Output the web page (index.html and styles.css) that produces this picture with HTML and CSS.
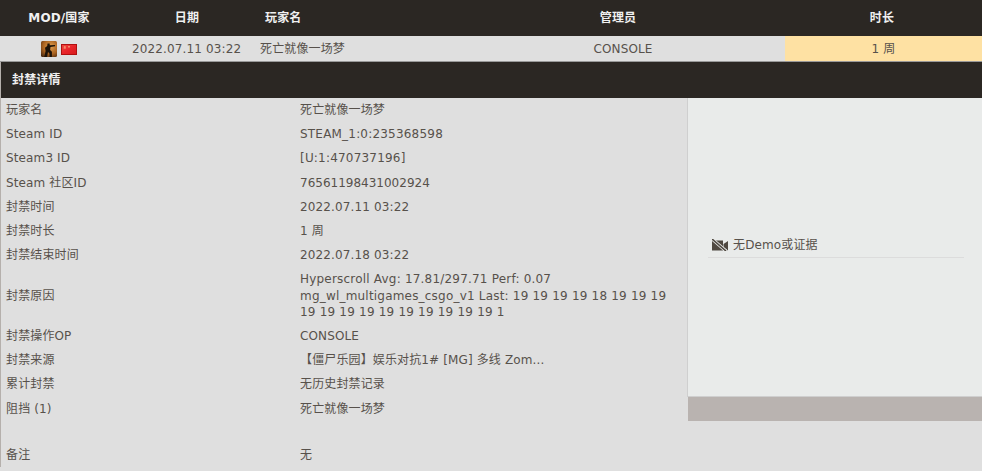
FILE: index.html
```html
<!DOCTYPE html>
<html lang="zh-CN">
<head>
<meta charset="utf-8">
<title>封禁详情</title>
<link rel="stylesheet" href="styles.css">
</head>
<body>
<div class="head">
  <div class="h-mod">MOD/国家</div>
  <div class="h-date">日期</div>
  <div class="h-name">玩家名</div>
  <div class="h-admin">管理员</div>
  <div class="h-len">时长</div>
</div>
<div class="ban">
  <div class="c-mod">
    <svg class="game" viewBox="0 0 16 16" width="16" height="16" aria-hidden="true">
      <defs><radialGradient id="gameBg" cx=".6" cy=".35" r=".8"><stop offset="0" stop-color="#e0a050"/><stop offset=".6" stop-color="#a8611f"/><stop offset="1" stop-color="#4a2a12"/></radialGradient></defs>
      <rect width="16" height="16" rx="1.500" fill="url(#gameBg)"/>
      <path d="M6.500 2.500h2.200v1.800l5.300-.4v1.300l-4.500.7-.4 3 1.800 1.800V16H8.500v-3.600L7 11l-1 5H3.200l1.400-6-.6-3.300 2.200-1.600z" fill="#1c1208"/>
    </svg>
    <svg class="flag" viewBox="0 0 16 11" width="16" height="11" aria-hidden="true">
      <defs><linearGradient id="flagBg" x1="0" y1="0" x2="1" y2="1"><stop offset="0" stop-color="#f04a3e"/><stop offset=".5" stop-color="#e8242a"/><stop offset="1" stop-color="#d41a1a"/></linearGradient></defs>
      <rect width="16" height="11" fill="url(#flagBg)"/>
      <rect x=".5" y=".5" width="15" height="10" fill="none" stroke="#b01010"/>
      <path d="M3 2l2 .6L4.500 5 2.600 4.500z M7 2h2v1.500H7z" fill="#f58a6a"/>
    </svg>
  </div>
  <div class="c-date">2022.07.11 03:22</div>
  <div class="c-name">死亡就像一场梦</div>
  <div class="c-admin">CONSOLE</div>
  <div class="c-len">1 周</div>
</div>
<div class="panel">
  <div class="title">封禁详情</div>
  <div class="detail">
    <div class="info">
      <div class="row"><div class="k">玩家名</div><div class="v">死亡就像一场梦</div></div>
      <div class="row"><div class="k">Steam ID</div><div class="v wide">STEAM_1:0:235368598</div></div>
      <div class="row"><div class="k">Steam3 ID</div><div class="v wide">[U:1:470737196]</div></div>
      <div class="row"><div class="k">Steam 社区ID</div><div class="v digits">76561198431002924</div></div>
      <div class="row"><div class="k">封禁时间</div><div class="v">2022.07.11 03:22</div></div>
      <div class="row"><div class="k">封禁时长</div><div class="v">1 周</div></div>
      <div class="row"><div class="k">封禁结束时间</div><div class="v">2022.07.18 03:22</div></div>
      <div class="row tall"><div class="k">封禁原因</div><div class="v reason">Hyperscroll Avg: 17.81/297.71 Perf: 0.07<br>mg_wl_multigames_csgo_v1 Last: 19 19 19 19 18 19 19 19<br>19 19 19 19 19 19 19 19 19 19 1</div></div>
      <div class="row"><div class="k">封禁操作OP</div><div class="v">CONSOLE</div></div>
      <div class="row"><div class="k">封禁来源</div><div class="v">【僵尸乐园】娱乐对抗1# [MG] 多线 Zom...</div></div>
      <div class="row"><div class="k">累计封禁</div><div class="v">无历史封禁记录</div></div>
      <div class="row"><div class="k">阻挡 (1)</div><div class="v">死亡就像一场梦</div></div>
    </div>
    <div class="side">
      <div class="demo-box">
        <div class="demo">
          <svg class="cam" viewBox="0 0 16 12" width="16" height="12" aria-hidden="true">
            <path d="M0 1.500h11v10H0z M11.500 5L16 2v9.500L11.500 8.500z" fill="#4f4840"/>
            <path d="M0 0l14 12" stroke="#e9ebea" stroke-width="3.200"/>
            <path d="M0 0l14 12" stroke="#4f4840" stroke-width="1.600"/>
          </svg>
          <span>无Demo或证据</span>
        </div>
      </div>
      <div class="actions"></div>
    </div>
  </div>
  <div class="row note"><div class="k">备注</div><div class="v">无</div></div>
</div>
</body>
</html>
```
FILE: styles.css
```css
* { box-sizing: border-box; }
html, body { margin: 0; padding: 0; }
body {
  width: 982px;
  height: 471px;
  overflow: hidden;
  background: #dfdfdf;
  color: #57514b;
  font: 12px/16.5px "DejaVu Sans", "Noto Sans CJK SC", sans-serif;
  letter-spacing: .13px;
}
.head {
  display: flex;
  align-items: center;
  height: 36px;
  background: #2b2723;
  color: #f0f0f0;
  font-weight: bold;
}
.h-mod { width: 118px; text-align: center; }
.h-date { width: 138px; text-align: center; }
.h-name { width: 200px; padding-left: 9px; }
.h-admin { width: 324px; text-align: center; }
.h-len { flex: 1; text-align: center; padding-left: 2px; }
.ban {
  display: flex;
  align-items: center;
  height: 26px;
  border-bottom: 1px solid #999;
}
.c-mod { width: 118px; display: flex; justify-content: center; align-items: center; gap: 4px; padding-top: 1px; }
.flag { margin-top: 1px; }
.c-date { width: 142px; padding: 1px 0 0 14px; }
.c-name { width: 201px; padding-top: 1px; }
.c-admin { width: 324px; padding-top: 1px; text-align: center; white-space: nowrap; }
.c-len { flex: 1; height: 25px; line-height: 26px; text-align: center; background: #fee1a3; }
.game, .flag { display: block; }
.panel { border-left: 1px solid #b5b0ac; }
.title {
  height: 36px;
  line-height: 37px;
  padding-left: 11px;
  background: #2b2723;
  color: #f0f0f0;
  font-weight: bold;
}
.detail { display: flex; }
.info { width: 687px; flex: none; }
.row { display: flex; align-items: center; height: 24.25px; }
.tall { height: 56.2px; }
.k { width: 299px; flex: none; padding-left: 5px; }
.v { flex: 1; }
.wide { letter-spacing: .2px; }
.digits { letter-spacing: 0; }
.reason { letter-spacing: .2px; }
.side { flex: 1; display: flex; flex-direction: column; }
.demo-box {
  flex: 1;
  display: flex;
  flex-direction: column;
  justify-content: center;
  padding: 0 18px 0 20px;
  background: #e9ebea;
  box-shadow: -1px 0 0 #cfcfcf;
  border-bottom: 1px solid #cfcfcf;
}
.demo {
  display: flex;
  align-items: center;
  gap: 5px;
  height: 26px;
  margin-top: -3px;
  padding-left: 4px;
  border-bottom: 1px solid #dcdcdc;
}
.cam { flex: none; }
.actions { height: 24px; background: #b9b3b0; }
.note { margin-top: 22px; }
```
